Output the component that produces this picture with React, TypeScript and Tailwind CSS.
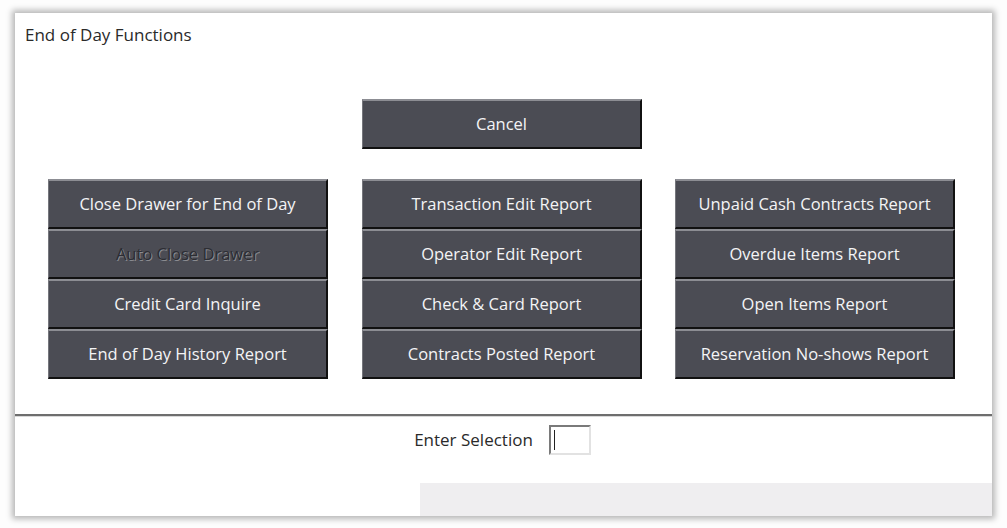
const left = ["Close Drawer for End of Day", "Auto Close Drawer", "Credit Card Inquire", "End of Day History Report"];
const middle = ["Transaction Edit Report", "Operator Edit Report", "Check & Card Report", "Contracts Posted Report"];
const right = ["Unpaid Cash Contracts Report", "Overdue Items Report", "Open Items Report", "Reservation No-shows Report"];

const FnButton = ({ label, disabled }: { label: string; disabled?: boolean }) => {
	return (
		<div
			className={
				"flex h-[50px] w-[280px] items-center justify-center border-t-2 border-l border-r-2 border-b-2 border-t-[#8c8d93] border-l-[#75767c] border-r-[#111] border-b-[#111] bg-[#4b4c54] text-[16.5px] " +
				(disabled ? "text-[#2c2d33] [text-shadow:1px_1px_0_#8a8b90]" : "text-[#f4f4f6]")
			}
		>
			{label}
		</div>
	);
};

const Column = ({ items }: { items: string[] }) => {
	return (
		<div className="flex flex-col">
			{items.map((e, i) => {
				return <FnButton key={i} label={e} disabled={e === "Auto Close Drawer"} />;
			})}
		</div>
	);
};

export default function App() {
	return (
		<div className="h-[528px] w-[1007px] overflow-hidden bg-[#fdfdfd] pl-[15px] pt-[13px] font-['Open_Sans',sans-serif]">
			<div className="flex h-[503px] w-[977px] flex-col bg-white shadow-[0_0_6px_3px_rgba(0,0,0,0.28)]">
				<div className="flex h-[401px] flex-col">
					<div className="h-[35px] pl-[10px] pt-[9px] text-[17px] leading-[26px] text-[#2a2a2a]">End of Day Functions</div>
					<div className="mt-[51px] flex pl-[347px]">
						<FnButton label="Cancel" />
					</div>
					<div className="mt-[30px] flex pl-[33px]">
						<Column items={left} />
						<div className="ml-[34px]">
							<Column items={middle} />
						</div>
						<div className="ml-[33px]">
							<Column items={right} />
						</div>
					</div>
				</div>
				<div className="h-[3px] border-t-2 border-[#6e6e6e] bg-[#d8d8d8]"></div>
				<div className="flex h-[46px] items-center justify-center gap-[16px] pr-[2px]">
					<span className="text-[17px] text-[#2a2a2a]">Enter Selection</span>
					<div className="flex h-[30px] w-[42px] items-center border-2 border-t-[#7a7a7a] border-l-[#7a7a7a] border-r-[#e2e2e2] border-b-[#e2e2e2] bg-white pl-[3px]">
						<div className="h-[20px] w-px bg-[#222]"></div>
					</div>
				</div>
				<div className="h-[20px]"></div>
				<div className="flex flex-1">
					<div className="w-[405px]"></div>
					<div className="flex-1 bg-[#efeef0]"></div>
				</div>
			</div>
		</div>
	);
}
